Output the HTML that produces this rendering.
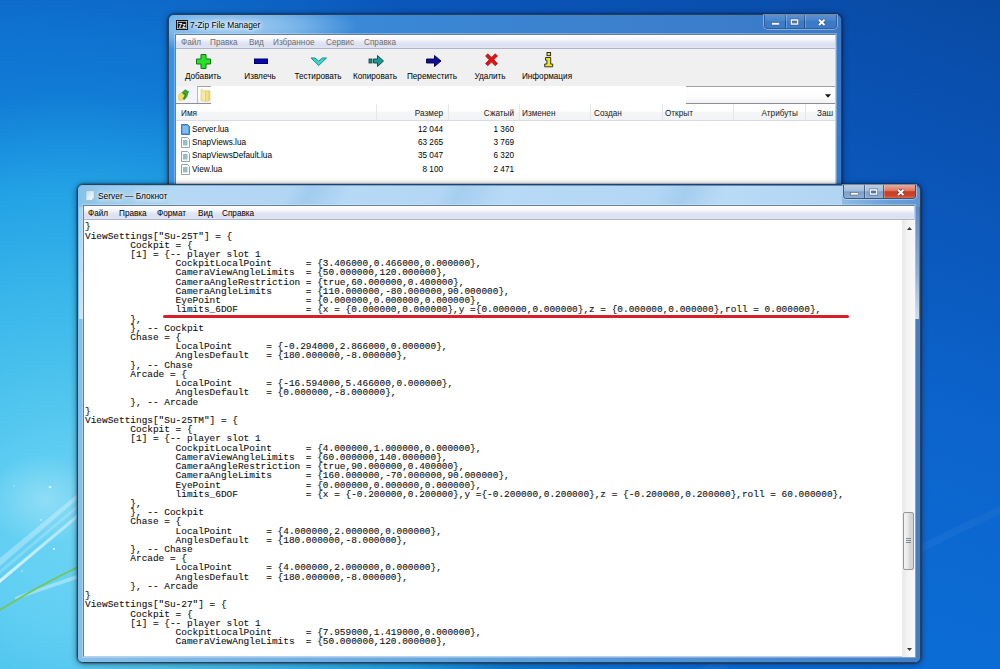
<!DOCTYPE html>
<html lang="ru">
<head>
<meta charset="utf-8">
<title>Server — Блокнот</title>
<style>
*{box-sizing:border-box;margin:0;padding:0}
html,body{width:1000px;height:669px;overflow:hidden}
body{position:relative;font-family:"Liberation Sans",sans-serif;font-size:8.2px;color:#000;
 background:
  radial-gradient(circle 630px at 70px 545px, #6ad3f4 0%, #60cef2 14%, #4ec4ee 25%, #38b5ea 41%, #22a1e5 57%, rgba(17,126,214,.9) 72%, rgba(13,91,189,0) 100%),
  linear-gradient(20deg,#0e74de 0%,#0c6cd6 35%,#0c64cc 58%,#0b5ec4 66%,#0a52b4 85%,#084aa2 100%);
}
.abs{position:absolute}
/* windows */
.win{position:absolute;border-radius:6px;border:1px solid #2d3f55;
 box-shadow:0 0 0 1px rgba(255,255,255,.55) inset, 0 0 2px rgba(0,0,20,.8), 0 1px 7px rgba(0,0,20,.45);}
.ttl{position:absolute;left:0;right:0;top:0;height:22px}
.ttl .cap{position:absolute;top:5.500px;font-size:8.4px;color:#000;white-space:nowrap;text-shadow:0 0 6px #fff,0 0 6px #fff,0 0 3px #fff}
.client{position:absolute;background:#fff;border:1px solid #6d7f96;border-right-color:#b4d2f0;border-bottom-color:#b4d2f0;box-shadow:0 0 0 1px rgba(220,238,252,.35)}
.menubar{position:absolute;left:0;right:0;top:0;height:14px;background:linear-gradient(#ffffff 0%,#f4f6fb 35%,#e3e7f4 55%,#dcdff0 80%,#e2e6f3 100%);border-bottom:1px solid #a9b6cc;white-space:nowrap}
.menubar span{position:absolute;top:2.5px;font-size:8.2px}
#txt{position:absolute;left:1px;top:16.4px;font-family:"Liberation Mono",monospace;font-size:9.445px;line-height:9.22px;color:#111;white-space:pre;-webkit-text-stroke:.1px #111}
#redline{position:absolute;left:78.500px;top:109.200px;width:686.500px;height:3px;border-radius:2px;background:#d8202a}
.glass{position:absolute;left:0;top:0;right:0;bottom:0;border-radius:5px}
.tb{position:absolute;left:0;right:0;top:14px;height:37px;background:#f0f0f0}
.tbb{position:absolute;top:22.5px;width:0;white-space:nowrap;display:flex;justify-content:center;font-size:8.2px}
.addr{position:absolute;left:0;right:0;top:51px;height:17.5px;background:#f4f4fa;border-bottom:1px solid #8d8d98}
.addr .combo{position:absolute;left:21px;right:0;top:0;height:16.5px;background:linear-gradient(#fff 0%,#fdfdfd 60%,#f1f1f1 100%);border:1px solid #b9b9b9;border-top:1.500px solid #a2a2a2;border-bottom:none;border-right:none}
.addr .wipe{position:absolute;left:35px;top:0;width:475px;height:18px;background:#fff}
.hdr{position:absolute;left:0;right:0;top:68.5px;height:17.5px;background:linear-gradient(#fff 0%,#fff 45%,#f5f6f8 50%,#f2f3f5 100%);border-bottom:1px solid #d9dde3;white-space:nowrap}
.hdr span{position:absolute;top:5.400px;font-size:8.2px;color:#1a1a1a}
.hdr i{position:absolute;top:0;bottom:0;width:1px;background:#e3e6ea}
.rows{position:absolute;left:0;right:0;top:87.5px}
.row{position:relative;height:13.4px;font-size:8.2px;white-space:nowrap}
.row svg{position:absolute;left:5px;top:1.5px}
.row b{position:absolute;left:16px;top:2px;font-weight:normal}
.row u{position:absolute;right:392px;top:2px;text-decoration:none}
.row s{position:absolute;right:321px;top:2px;text-decoration:none}
#sb{position:absolute;right:-1px;top:14px;bottom:-1px;width:13px;background:linear-gradient(90deg,#e8e8e8,#f4f4f4 40%,#f8f8f8);border-left:1px solid #ececec}
#thumb{position:absolute;left:0;width:11px;top:292px;height:58px;border:1px solid #979797;border-radius:2px;background:linear-gradient(90deg,#f3f3f3 0%,#e9e9ea 48%,#d9dadc 52%,#d2d3d6 100%)}
#thumb i{position:absolute;left:2px;top:25px;width:5px;height:5px;background:repeating-linear-gradient(#7f8792 0,#7f8792 1px,transparent 1px,transparent 2px)}
#w7 .cap{top:5px}
#wn .menubar span{top:3px}
/* caption buttons */
.cb{position:absolute;top:0;height:13.5px;border:1px solid rgba(40,58,90,.75);border-top:none;border-radius:0 0 4px 4px;overflow:hidden;box-shadow:0 0 0 1px rgba(255,255,255,.38)}
.cb i{position:absolute;top:0;bottom:0;border-right:1px solid rgba(40,58,90,.7);box-shadow:1px 0 0 rgba(255,255,255,.25)}
</style>
</head>
<body>
<svg class="abs" style="left:0;top:0" width="1000" height="669" viewBox="0 0 1000 669">
 <defs>
  <linearGradient id="ws" x1="0" y1="1" x2="1" y2="0"><stop offset="0" stop-color="#fff" stop-opacity=".75"/><stop offset="1" stop-color="#fff" stop-opacity=".35"/></linearGradient>
  <radialGradient id="gl"><stop offset="0" stop-color="#fff" stop-opacity=".28"/><stop offset="1" stop-color="#fff" stop-opacity="0"/></radialGradient>
 </defs>
 <ellipse cx="45" cy="500" rx="60" ry="45" fill="url(#gl)"/>
 <path d="M0 579 L80 512 L80 516 L0 583z" fill="url(#ws)"/>
 <path d="M0 558 L80 492 L80 497 L0 566z" fill="#fff" opacity=".3"/>
 <path d="M0 570 L80 503 L80 506 L0 574z" fill="#fff" opacity=".2"/>
 <path d="M15 597 Q50 584 80 574 L80 578 Q50 588 15 600z" fill="#fff" opacity=".35"/>
 <path d="M0 610 Q40 585 80 566" fill="none" stroke="#74c64e" stroke-width="1.700"/>
 <g fill="#fff" opacity=".8"><circle cx="50" cy="487" r="1.300"/><circle cx="54" cy="549" r="1.100"/><circle cx="41" cy="520" r=".8"/><circle cx="14" cy="486" r=".6"/><circle cx="22" cy="571" r=".7"/></g>
 <path d="M700 669 Q800 600 1000 506 L1000 514 Q800 610 725 669z" fill="#fff" opacity=".035"/>
</svg>

<!-- 7-Zip window -->
<div class="win" id="w7" style="left:168px;top:14px;width:674px;height:400px">
 <div class="glass" style="background:radial-gradient(ellipse 130px 26px at 60px 11px,rgba(190,222,245,.85) 0%,rgba(160,205,240,.6) 55%,rgba(120,180,230,0) 100%),linear-gradient(90deg,#3692e4 0%,#3a88d6 30%,#3c82ce 60%,#3a7ac8 100%)"></div>
 <div class="ttl">
  <svg class="abs" style="left:7px;top:5px" width="12" height="10" viewBox="0 0 12 10"><rect x="0" y="0" width="12" height="10" fill="#111"/><rect x="1" y="1" width="10" height="8" fill="#fff"/><rect x="1.6" y="1.6" width="8.8" height="6.8" fill="#111"/><text x="6" y="7.6" font-family="Liberation Sans,sans-serif" font-size="7" font-weight="bold" fill="#fff" text-anchor="middle">7z</text></svg>
  <span class="cap" style="left:21px">7-Zip File Manager</span>
  <div class="cb" style="left:595px;width:73px;border-color:rgba(40,58,90,.45)"><i style="left:0;width:21px"></i><i style="left:21px;width:19px"></i>
   <div class="abs" style="left:0;right:0;top:0;height:6px;background:linear-gradient(rgba(255,255,255,.16),rgba(255,255,255,.06))"></div>
   <svg class="abs" style="left:0;top:0" width="73" height="13" viewBox="0 0 73 13"><rect x="6.5" y="7.5" width="8" height="2.5" fill="#fff" stroke="#3d4d66" stroke-width=".5"/><rect x="26.2" y="4.9" width="6.6" height="4.2" fill="#5a7396" stroke="#fff" stroke-width="1.4"/><rect x="25.2" y="3.9" width="8.6" height="6.200" fill="none" stroke="#3d4d66" stroke-width=".4"/><path d="M54 4.700 L59.500 10 M59.500 4.700 L54 10" stroke="#3d4d66" stroke-width="3.200"/><path d="M54 4.700 L59.500 10 M59.500 4.700 L54 10" stroke="#fff" stroke-width="2"/></svg>
  </div>
 </div>
 <div class="client" style="left:6px;top:19px;right:5px;bottom:6px">
  <div class="menubar"><span style="left:5px;color:#6d6d6d">Файл</span><span style="left:34px;color:#6d6d6d">Правка</span><span style="left:73px;color:#6d6d6d">Вид</span><span style="left:97px;color:#6d6d6d">Избранное</span><span style="left:150px;color:#6d6d6d">Сервис</span><span style="left:188px;color:#6d6d6d">Справка</span></div>
  <div class="tb">
   <div class="tbb" style="left:27px"><span>Добавить</span></div>
   <div class="tbb" style="left:84px"><span>Извлечь</span></div>
   <div class="tbb" style="left:142px"><span>Тестировать</span></div>
   <div class="tbb" style="left:199px"><span>Копировать</span></div>
   <div class="tbb" style="left:256px"><span>Переместить</span></div>
   <div class="tbb" style="left:314px"><span>Удалить</span></div>
   <div class="tbb" style="left:371px"><span>Информация</span></div>
   <svg class="abs" style="left:0;top:0" width="420" height="24" viewBox="0 0 420 24">
    <path d="M25 5.5h5v4.5h4.5v5h-4.5v4.5h-5v-4.5h-4.5v-5h4.5z" fill="#2be02b" stroke="#0a7a0a" stroke-width="1"/>
    <rect x="78.5" y="10" width="13" height="4.5" fill="#0a0ab4" stroke="#00005a" stroke-width="1"/>
    <path d="M135 9h4l3.7 3.2 3.7-3.2h4l-7.7 7.5z" fill="#3fd4d4" stroke="#0f8f8f" stroke-width="1"/>
    <rect x="193" y="10" width="3" height="4" fill="#1d8a8a" stroke="#0a4040" stroke-width=".8"/><path d="M197.5 10h4v-3.5l6 5.5-6 5.500v-3.5h-4z" fill="#1d9a94" stroke="#0a4040" stroke-width=".9"/>
    <path d="M250.500 10h8v-3.500l6.500 5.500-6.500 5.500v-3.500h-8z" fill="#10109a" stroke="#00004a" stroke-width=".9"/>
    <path d="M309.500 7l2.300-2.300 3.700 3.700 3.700-3.700 2.300 2.300-3.700 3.800 3.700 3.700-2.300 2.300-3.700-3.700-3.700 3.700-2.300-2.300 3.700-3.700z" fill="#e01414" stroke="#8a0a0a" stroke-width=".6"/>
    <g fill="#f2e21a" stroke="#222" stroke-width=".9"><rect x="371" y="3.500" width="3.600" height="3.200"/><path d="M369.500 8.500h5.200v6.500h2v2.800h-8v-2.800h2.200v-3.800h-1.400z"/></g>
   </svg>
  </div>
  <div class="addr">
   <div class="combo"></div>
   <div class="wipe"></div>
   <svg class="abs" style="left:0;top:0" width="50" height="18" viewBox="0 0 50 18">
    <defs><linearGradient id="fy" x1="0" y1="0" x2="1" y2="0"><stop offset="0" stop-color="#f6e48a"/><stop offset=".5" stop-color="#fbf0b0"/><stop offset="1" stop-color="#e9cb58"/></linearGradient></defs>
    <path d="M3 14.300c-.8-1.500-.6-5 .3-6.600l2.700-1.500 1.500.8 2.500-.5.800 3-2.600 4.400z" fill="#f3df62" stroke="#d9c048" stroke-width=".5"/>
    <path d="M6.200 6.500l3-2.800 3.600 2.300-1.300.7c.2 2.300-1 5-3.300 6.800l-1.100-1c1.300-1.400 2-3 1.900-4.700l-1.200.6z" fill="#2fae2f" stroke="#127012" stroke-width=".6"/>
    <path d="M25 3.800h2.600l.8 .9h5.600v9.800l-4 .9-5-1z" fill="url(#fy)" stroke="#dcc25a" stroke-width=".5"/><path d="M29.600 4.700v10.500" stroke="#d7b94a" stroke-width=".7"/>
   </svg>
   <svg class="abs" style="right:4px;top:7.500px" width="6" height="4" viewBox="0 0 6 4"><path d="M0 .3h6l-3 3.400z" fill="#111"/></svg>
  </div>
  <div class="hdr">
   <span style="left:5px">Имя</span><span style="right:392px">Размер</span><span style="right:321px">Сжатый</span><span style="left:346px">Изменен</span><span style="left:418px">Создан</span><span style="left:489px">Открыт</span><span style="right:37px">Атрибуты</span><span style="left:641px">Заш</span>
   <i style="left:200px"></i><i style="left:272px"></i><i style="left:343px"></i><i style="left:414px"></i><i style="left:486px"></i><i style="left:557px"></i><i style="left:629px"></i>
  </div>
  <div class="rows">
   <div class="row"><svg width="9" height="11" viewBox="0 0 9 11"><path d="M.5.500h6l2 2v8h-8z" fill="#5aa2e6" stroke="#3a78c0"/><rect x="1.500" y="2" width="5.500" height="7" fill="#7fbcf2"/></svg><b>Server.lua</b><u>12 044</u><s>1 360</s></div>
   <div class="row"><svg width="9" height="11" viewBox="0 0 9 11"><path d="M.5.500h6l2 2v8h-8z" fill="#fff" stroke="#9aa3ad"/><rect x="2" y="3" width="4.500" height="5.500" fill="#94c0c4"/></svg><b>SnapViews.lua</b><u>63 265</u><s>3 769</s></div>
   <div class="row"><svg width="9" height="11" viewBox="0 0 9 11"><path d="M.5.500h6l2 2v8h-8z" fill="#fff" stroke="#9aa3ad"/><rect x="2" y="3" width="4.500" height="5.500" fill="#94c0c4"/></svg><b>SnapViewsDefault.lua</b><u>35 047</u><s>6 320</s></div>
   <div class="row"><svg width="9" height="11" viewBox="0 0 9 11"><path d="M.5.500h6l2 2v8h-8z" fill="#fff" stroke="#9aa3ad"/><rect x="2" y="3" width="4.500" height="5.500" fill="#94c0c4"/></svg><b>View.lua</b><u>8 100</u><s>2 471</s></div>
  </div>
 </div>
</div>

<!-- Notepad window -->
<div class="win" id="wn" style="left:77px;top:184.400px;width:844px;height:478.200px">
 <div class="glass" style="background:linear-gradient(90deg,#86bfe8 0%,#7cb8e6 12%,#68a8e0 40%,#4e8ed2 75%,#427ec4 100%)"></div>
 <div class="abs" style="left:1px;width:5px;top:22px;height:112px;background:linear-gradient(rgba(255,255,255,.3),rgba(255,255,255,.6))"></div>
 <div class="abs" style="right:1px;width:5px;top:22px;height:112px;background:linear-gradient(rgba(255,255,255,.12),rgba(255,255,255,.4) 60%,rgba(255,255,255,.75))"></div>
 <div class="abs" style="left:91px;width:673px;top:1px;height:21px;background:linear-gradient(115deg,#b5d8f5 0%,#b1d5f3 18%,#a3cbee 21%,#b6d9f6 27%,#b3d6f4 40%,#a6ceef 43%,#b8daf6 50%,#b2d6f4 72%,#a5cdee 76%,#badbf6 82%,#b0d4f2 100%)"></div>
 <div class="abs" style="left:1px;width:90px;top:1px;height:21px;border-radius:5px 0 0 0;background:linear-gradient(90deg,#86c2e8,#9ccdee 40%,#add5f2)"></div>
 <div class="abs" style="left:764px;width:78px;top:1px;height:21px;border-radius:0 5px 0 0;background:linear-gradient(90deg,#8dbce6,#6a9fd8 60%,#6196d2)"></div>
 <div class="ttl">
  <svg class="abs" style="left:7px;top:5px" width="10" height="11" viewBox="0 0 10 11"><defs><linearGradient id="np" x1="0" y1="0" x2="1" y2="1"><stop offset="0" stop-color="#b5dcea"/><stop offset=".55" stop-color="#dff1f6"/><stop offset="1" stop-color="#fff"/></linearGradient></defs><path d="M.8 1.200q0-.6.6-.6h7.200q.6 0 .6.600v7l-1.800 2.200h-6q-.6 0-.6-.6z" fill="url(#np)" stroke="#8fb2c6" stroke-width=".7"/><path d="M7.400 10.300l.2-1.900 1.600-.3z" fill="#cfe3ec" stroke="#9bb9c9" stroke-width=".4"/></svg>
  <span class="cap" style="left:20px">Server — Блокнот</span>
  <div class="cb" style="left:765px;width:73px"><i style="left:0;width:21px"></i><i style="left:21px;width:19px"></i>
   <div class="abs" style="left:0;width:40px;top:0;bottom:0;background:linear-gradient(#b9cfe6 0%,#a3bedc 45%,#7d9fca 52%,#8fafd4 100%)"></div>
   <div class="abs" style="left:40px;right:0;top:0;bottom:0;background:linear-gradient(#e9aa9c 0%,#dc7a66 42%,#cb3d22 52%,#c8452c 80%,#d8684e 100%)"></div>
   <i style="left:0;width:21px"></i><i style="left:21px;width:19px"></i>
   <svg class="abs" style="left:0;top:0" width="73" height="13" viewBox="0 0 73 13"><rect x="6.5" y="7.5" width="8" height="2.5" fill="#fff" stroke="#3d4d66" stroke-width=".5"/><rect x="26.2" y="4.9" width="6.6" height="4.2" fill="#5a7396" stroke="#fff" stroke-width="1.4"/><rect x="25.2" y="3.9" width="8.6" height="6.200" fill="none" stroke="#3d4d66" stroke-width=".4"/><path d="M54 4.700 L59.500 10 M59.500 4.700 L54 10" stroke="#6a2a20" stroke-width="3.200"/><path d="M54 4.700 L59.500 10 M59.500 4.700 L54 10" stroke="#fff" stroke-width="2"/></svg>
  </div>
 </div>
 <div class="client" style="left:5px;top:19.600px;right:5px;bottom:5px">
  <div class="menubar"><span style="left:4px">Файл</span><span style="left:35px">Правка</span><span style="left:73px">Формат</span><span style="left:114px">Вид</span><span style="left:138px">Справка</span></div>
  <pre id="txt">}
ViewSettings["Su-25T"] = {
        Cockpit = {
        [1] = {-- player slot 1
                CockpitLocalPoint      = {3.406000,0.466000,0.000000},
                CameraViewAngleLimits  = {50.000000,120.000000},
                CameraAngleRestriction = {true,60.000000,0.400000},
                CameraAngleLimits      = {110.000000,-80.000000,90.000000},
                EyePoint               = {0.000000,0.000000,0.000000},
                limits_6DOF            = {x = {0.000000,0.000000},y ={0.000000,0.000000},z = {0.000000,0.000000},roll = 0.000000},
        },
        }, -- Cockpit
        Chase = {
                LocalPoint      = {-0.294000,2.866000,0.000000},
                AnglesDefault   = {180.000000,-8.000000},
        }, -- Chase
        Arcade = {
                LocalPoint      = {-16.594000,5.466000,0.000000},
                AnglesDefault   = {0.000000,-8.000000},
        }, -- Arcade
}
ViewSettings["Su-25TM"] = {
        Cockpit = {
        [1] = {-- player slot 1
                CockpitLocalPoint      = {4.000000,1.000000,0.000000},
                CameraViewAngleLimits  = {60.000000,140.000000},
                CameraAngleRestriction = {true,90.000000,0.400000},
                CameraAngleLimits      = {160.000000,-70.000000,90.000000},
                EyePoint               = {0.000000,0.000000,0.000000},
                limits_6DOF            = {x = {-0.200000,0.200000},y ={-0.200000,0.200000},z = {-0.200000,0.200000},roll = 60.000000},
        },
        }, -- Cockpit
        Chase = {
                LocalPoint      = {4.000000,2.000000,0.000000},
                AnglesDefault   = {180.000000,-8.000000},
        }, -- Chase
        Arcade = {
                LocalPoint      = {4.000000,2.000000,0.000000},
                AnglesDefault   = {180.000000,-8.000000},
        }, -- Arcade
}
ViewSettings["Su-27"] = {
        Cockpit = {
        [1] = {-- player slot 1
                CockpitLocalPoint      = {7.959000,1.419000,0.000000},
                CameraViewAngleLimits  = {50.000000,120.000000},</pre>
  <div id="redline"></div>
  <div id="sb">
   <svg class="abs" style="left:3.500px;top:7px" width="5" height="3" viewBox="0 0 5 3"><path d="M0 3L2.500 0 5 3z" fill="#3a3a3a"/></svg>
   <div id="thumb"><i></i></div>
   <svg class="abs" style="left:3.500px;bottom:5.500px" width="5" height="3" viewBox="0 0 5 3"><path d="M0 0L2.500 3 5 0z" fill="#3a3a3a"/></svg>
  </div>
 </div>
</div>

</body>
</html>
